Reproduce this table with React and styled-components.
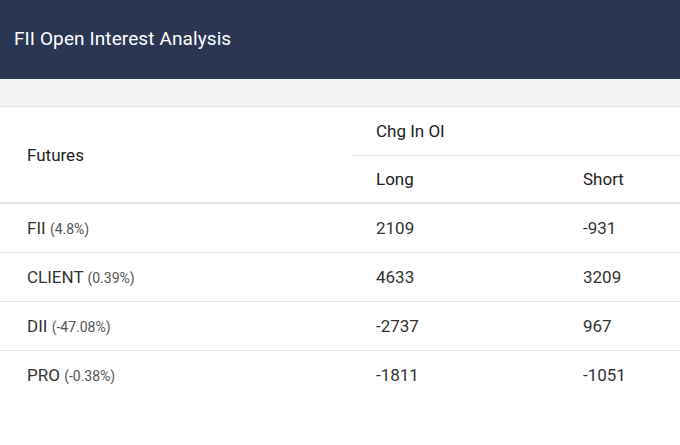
import React from "react";
import styled, { createGlobalStyle } from "styled-components";

const Global = createGlobalStyle`
  html, body { margin: 0; padding: 0; background: #fff; }
  body { font-family: Roboto, "Noto Sans", "Liberation Sans", sans-serif; }
`;

const Page = styled.div`
  width: 680px;
  height: 445px;
  overflow: hidden;
  background: #fff;
`;

const TopBar = styled.header`
  height: 79px;
  background: #2b3752;
  display: flex;
  align-items: center;
  padding: 0 14px 3px;
  box-sizing: border-box;
`;

const Title = styled.h1`
  margin: 0;
  font-size: 19px;
  font-weight: 400;
  color: #fff;
  letter-spacing: 0.1px;
`;

const Band = styled.div`
  height: 27px;
  background: #f4f4f4;
  border-bottom: 1px solid #e2e2e2;
`;

const Table = styled.table`
  width: 100%;
  border-collapse: collapse;
  table-layout: fixed;
  color: #333;
  font-size: 17px;
`;

const Th = styled.th`
  font-weight: 400;
  text-align: left;
  color: #222;
  height: 48px;
  padding: 0 0 0 ${(p) => p.$pad || 26}px;
  box-sizing: border-box;
  vertical-align: middle;
  border-bottom: ${(p) => (p.$thick ? "2px solid #e4e4e4" : "1px solid #e8e8e8")};
`;

const Row = styled.tr`
  &:last-child td { border-bottom: none; }
`;

const Td = styled.td`
  height: 49px;
  padding: 1px 0 0 ${(p) => p.$pad || 26}px;
  box-sizing: border-box;
  border-bottom: 1px solid #e6e6e6;
  vertical-align: middle;
`;

const Pct = styled.span`
  font-size: 14px;
  color: #555;
`;

const rows = [
  { name: "FII", pct: "4.8%", long: "2109", short: "-931" },
  { name: "CLIENT", pct: "0.39%", long: "4633", short: "3209" },
  { name: "DII", pct: "-47.08%", long: "-2737", short: "967" },
  { name: "PRO", pct: "-0.38%", long: "-1811", short: "-1051" },
];

export default function App() {
  return (
    <Page>
      <Global />
      <TopBar>
        <Title>FII Open Interest Analysis</Title>
      </TopBar>
      <Band />
      <Table>
        <colgroup>
          <col style={{ width: 350 }} />
          <col style={{ width: 207 }} />
          <col style={{ width: 123 }} />
        </colgroup>
        <thead>
          <tr>
            <Th rowSpan={2} $pad={27} $thick>
              Futures
            </Th>
            <Th colSpan={2}>Chg In OI</Th>
          </tr>
          <tr>
            <Th $thick>Long</Th>
            <Th $thick>Short</Th>
          </tr>
        </thead>
        <tbody>
          {rows.map((r) => (
            <Row key={r.name}>
              <Td $pad={27}>
                {r.name} <Pct>({r.pct})</Pct>
              </Td>
              <Td>{r.long}</Td>
              <Td>{r.short}</Td>
            </Row>
          ))}
        </tbody>
      </Table>
    </Page>
  );
}
